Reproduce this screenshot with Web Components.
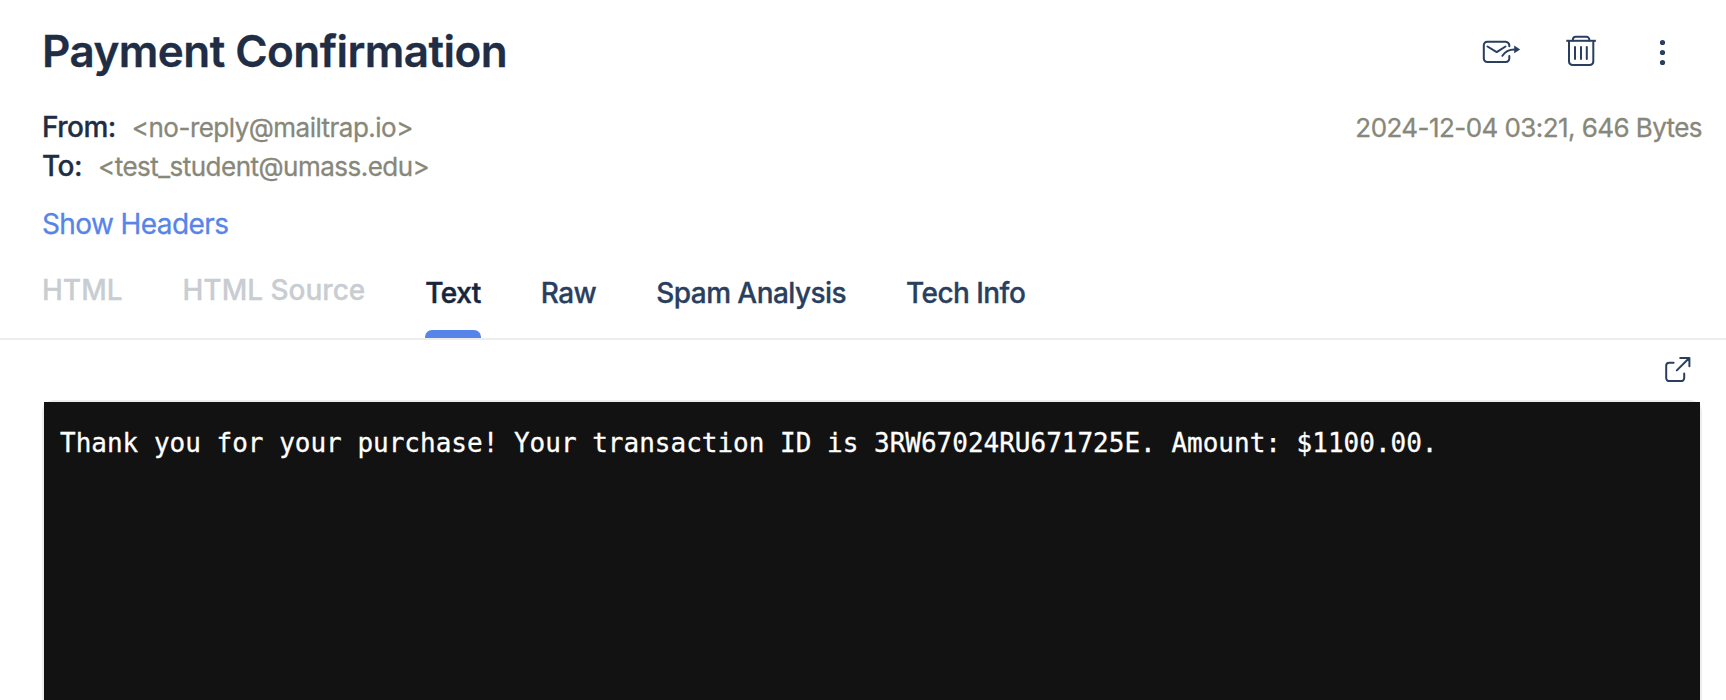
<!DOCTYPE html>
<html lang="en">
<head>
<meta charset="utf-8">
<title>Payment Confirmation</title>
<style>
html,body{margin:0;height:100%;overflow:hidden;background:#fff}
body{font-family:Inter,"Liberation Sans",sans-serif;color:#1f2d45;-webkit-text-stroke:.3px}
</style>
</head>
<body>
<mail-message>
  <mail-header slot="header">
    <span slot="subject">Payment Confirmation</span>
    <mail-icon slot="actions" name="forward"></mail-icon>
    <mail-icon slot="actions" name="trash"></mail-icon>
    <mail-icon slot="actions" name="more"></mail-icon>
  </mail-header>
  <mail-meta slot="meta">
    <mail-address slot="people" label="From:">&lt;no-reply@mailtrap.io&gt;</mail-address>
    <mail-address slot="people" label="To:">&lt;test_student@umass.edu&gt;</mail-address>
    <span slot="info">2024-12-04 03:21, 646 Bytes</span>
    <span slot="link">Show Headers</span>
  </mail-meta>
  <mail-tabs slot="tabs">
    <mail-tab disabled>HTML</mail-tab>
    <mail-tab disabled>HTML Source</mail-tab>
    <mail-tab active>Text</mail-tab>
    <mail-tab>Raw</mail-tab>
    <mail-tab>Spam Analysis</mail-tab>
    <mail-tab>Tech Info</mail-tab>
  </mail-tabs>
  <mail-body>Thank you for your purchase! Your transaction ID is 3RW67024RU671725E. Amount: $1100.00.</mail-body>
</mail-message>
<script>
const define = (name, html, setup) => customElements.define(name, class extends HTMLElement {
  constructor() {
    super();
    this.attachShadow({ mode: 'open' }).innerHTML = html;
  }
  connectedCallback() { if (setup) setup(this); }
});

const icons = {
  forward: [44, 36, `<path d="M29.3 13.3V12a4 4 0 0 0-3.6-3.3H7.3a3.5 3.5 0 0 0-3.5 3.5v13.3A3.5 3.5 0 0 0 7.3 29h18.5a3.5 3.5 0 0 0 3.5-3.5v-2.6"/><path d="M7.5 13.5l9.2 5.6 8.8-5.6M22.4 22.8c2.1-3.5 5.8-6.4 12-6.4"/><path d="M34.2 12.4l6 4-6 3.8z" fill="currentColor" stroke="none"/>`],
  trash: [36, 36, `<path stroke-linecap="butt" d="M3.3 7.8h29.6"/><path d="M9.9 7.5V6.6a2.8 2.8 0 0 1 2.8-2.8h10.8a2.8 2.8 0 0 1 2.8 2.8v.9M6 8v20.6A3.5 3.5 0 0 0 9.5 32h17.3a3.5 3.5 0 0 0 3.5-3.4V8M12 14v12M18 14v12M23.8 14v12"/>`],
  more: [20, 36, `<g fill="currentColor" stroke="none"><circle cx="10.5" cy="9.5" r="2.6"/><circle cx="10.5" cy="19.5" r="2.6"/><circle cx="10.5" cy="29.5" r="2.6"/></g>`],
  open: [32, 32, `<path d="M13.6 8.8H9.2A3 3 0 0 0 6.2 11.8v12.3a3 3 0 0 0 3 3h12a3 3 0 0 0 3-3v-4.7M16.8 16.4L29 4.2M20.2 3.9h9.2v8.4"/>`]
};

define('mail-icon', `<style>
  :host{display:block;color:#2a3f60}
  svg{display:block;fill:none;stroke:currentColor;stroke-width:2;stroke-linecap:round;stroke-linejoin:round}
</style><svg></svg>`, el => {
  const [w, h, art] = icons[el.getAttribute('name')];
  const svg = el.shadowRoot.querySelector('svg');
  svg.setAttribute('width', w);
  svg.setAttribute('height', h);
  svg.setAttribute('viewBox', `0 0 ${w} ${h}`);
  svg.innerHTML = art;
});

define('mail-header', `<style>
  :host{display:flex;justify-content:space-between;align-items:center;height:52px;padding:25px 54px 0 42px}
  h1{margin:0;font-size:44px;line-height:52px;font-weight:600;letter-spacing:-.55px;white-space:nowrap}
  .actions{display:grid;grid-template-columns:44px 50px 20px;column-gap:39px}
</style><h1><slot name="subject"></slot></h1><div class="actions"><slot name="actions"></slot></div>`);

define('mail-address', `<style>
  :host{display:flex;align-items:baseline;line-height:39px;font-size:26px;letter-spacing:-.52px;color:#87877a;white-space:nowrap}
  b{font-size:28px;font-weight:500;letter-spacing:-.5px;color:#1f2d45;margin-right:16px}
</style><b></b><slot></slot>`, el => {
  el.shadowRoot.querySelector('b').textContent = el.getAttribute('label');
});

define('mail-meta', `<style>
  :host{display:block;padding:31px 24px 0 42px}
  .row{display:flex;justify-content:space-between;align-items:flex-start}
  .info{font-size:26px;line-height:39px;letter-spacing:-.57px;color:#87877a}
  .link{margin-top:19px;font-size:28px;line-height:39px;letter-spacing:-.6px;color:#5784e8}
</style><div class="row"><div><slot name="people"></slot></div><div class="info"><slot name="info"></slot></div></div>
<div class="link"><slot name="link"></slot></div>`);

define('mail-tab', `<style>
  :host{display:flex;flex-direction:column;justify-content:space-between;height:65px;font-size:28px;line-height:40px;font-weight:500;letter-spacing:-.56px;color:#2a3f60;white-space:nowrap}
  :host([disabled]){color:#c8cdd2;letter-spacing:0;margin-top:-3px}
  :host([active]){color:#17243d;letter-spacing:-.5px;-webkit-text-stroke:.5px}
  i{display:none;height:8px;border-radius:7px 7px 0 0;background:#5784e8}
  :host([active]) i{display:block}
</style><span><slot></slot></span><i></i>`);

define('mail-tabs', `<style>
  :host{display:flex;gap:60px;margin-top:29px;padding:0 42px;border-bottom:2px solid #ececec}
</style><slot></slot>`);

define('mail-body', `<style>
  :host{display:flex;flex-direction:column;flex:1;padding:0 24px 0 42px}
  mail-icon{align-self:flex-end;margin:14px 10px 14px 0}
  .frame{flex:1;display:flex;padding:2px 2px 0;border-radius:12px 12px 0 0;background:#ebeef0}
  pre{flex:1;margin:0;padding:23px 16px;background:#121212;color:#fff;font:26px/36px "DejaVu Sans Mono","Liberation Mono",monospace}
</style><mail-icon name="open"></mail-icon><div class="frame"><pre><slot></slot></pre></div>`);

define('mail-message', `<style>
  :host{display:flex;flex-direction:column;height:100vh}
</style><slot name="header"></slot><slot name="meta"></slot><slot name="tabs"></slot><slot></slot>`);
</script>
</body>
</html>
